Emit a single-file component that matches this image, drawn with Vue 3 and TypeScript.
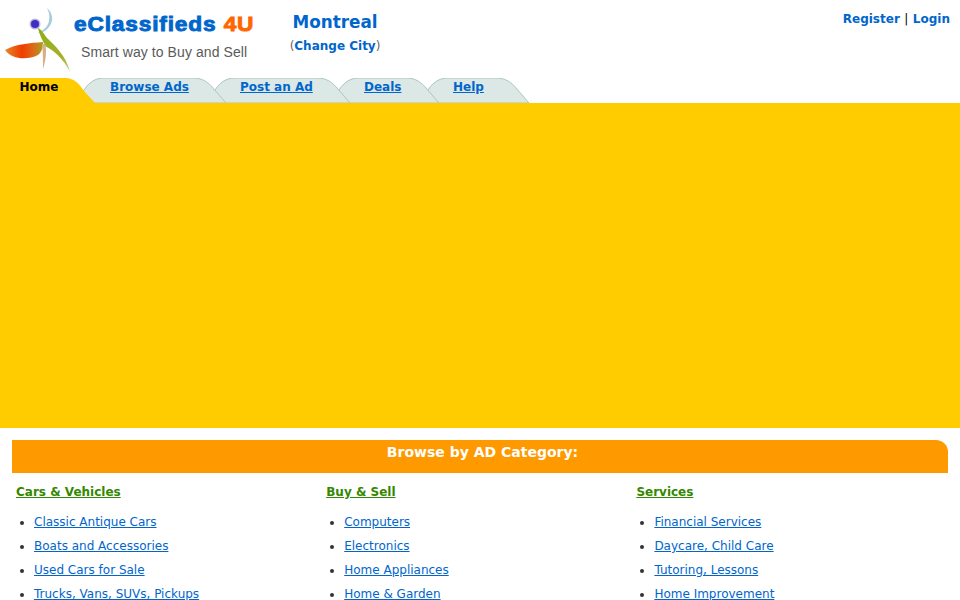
<script setup lang="ts">
interface Tab { label: string; width: number; pad: number; active?: boolean }
const tabs: Tab[] = [
  { label: 'Home', width: 95, pad: 19.5, active: true },
  { label: 'Browse Ads', width: 147, pad: 31 },
  { label: 'Post an Ad', width: 140, pad: 30 },
  { label: 'Deals', width: 105, pad: 30 },
  { label: 'Help', width: 106, pad: 30 },
]
function shape(t: Tab): string {
  const w = t.width
  if (t.active) return `M0 25V0H${w - 30}C${w - 20} 0 ${w - 15} 7 ${w - 11} 13L${w} 25Z`
  return `M0 25L4 14C8 6 15 0 25 0H${w - 33}C${w - 23} 0 ${w - 17} 5 ${w - 13} 10L${w} 25Z`
}
const columns = [
  { title: 'Cars & Vehicles', items: ['Classic Antique Cars', 'Boats and Accessories', 'Used Cars for Sale', 'Trucks, Vans, SUVs, Pickups'] },
  { title: 'Buy & Sell', items: ['Computers', 'Electronics', 'Home Appliances', 'Home & Garden'] },
  { title: 'Services', items: ['Financial Services', 'Daycare, Child Care', 'Tutoring, Lessons', 'Home Improvement'] },
]
</script>

<template>
  <div class="page">
    <header class="header">
      <div class="logo">
        <svg class="mark" width="74" height="78" viewBox="0 0 74 78" aria-hidden="true">
          <defs>
            <linearGradient id="wing" x1="0" y1="0" x2="1" y2="0">
              <stop offset="0" stop-color="#e8862a" />
              <stop offset="0.45" stop-color="#f03c00" />
              <stop offset="0.75" stop-color="#dc6a1a" />
              <stop offset="1" stop-color="#a8a020" />
            </linearGradient>
            <linearGradient id="leg" x1="0" y1="0" x2="0" y2="1">
              <stop offset="0" stop-color="#8cae10" />
              <stop offset="0.7" stop-color="#a8b030" />
              <stop offset="1" stop-color="#d0d090" />
            </linearGradient>
          </defs>
          <path d="M47 8C53 13 54 21 49 27C46 31 42 33 38 33C43 30 48 27 49 21C50 16 49 12 47 8Z" fill="#a9cbdc" />
          <circle cx="35" cy="24" r="5.5" fill="#b6b4ec" />
          <circle cx="35" cy="24" r="4" fill="#3f2cc0" />
          <path d="M5 50C16 44 30 43 43 42C43 47 42 52 38 55C28 60 12 60 5 50Z" fill="url(#wing)" />
          <path d="M38 28C41 29 44 34 47 38C55 46 66 55 70 72C63 58 53 50 45 46C42 39 39 34 38 28Z" fill="url(#leg)" />
          <path d="M45 43C47 51 46 60 43 69C43 60 43 51 42 45Z" fill="#d8b088" />
        </svg>
        <div class="wordmark">
          <div class="brand">eClassifieds <span class="four">4U</span></div>
          <div class="slogan">Smart way to Buy and Sell</div>
        </div>
      </div>
      <div class="city">
        <a class="city-name" href="#">Montreal</a>
        <div class="change">(<a href="#">Change City</a>)</div>
      </div>
      <div class="account">
        <a href="#">Register</a><span class="sep">|</span><a href="#">Login</a>
      </div>
    </header>

    <nav class="tabs">
      <div
        v-for="(t, i) in tabs"
        :key="t.label"
        class="tab"
        :class="{ active: t.active }"
        :style="{ width: t.width + 'px', paddingLeft: t.pad + 'px', zIndex: tabs.length - i }"
      >
        <svg class="tab-bg" :width="t.width" height="25" :viewBox="`0 0 ${t.width} 25`" aria-hidden="true">
          <path :d="shape(t)" class="tab-shape" />
        </svg>
        <a class="tab-link" href="#">{{ t.label }}</a>
      </div>
    </nav>

    <div class="band"></div>

    <section class="browse">
      <h2 class="browse-title">Browse by AD Category:</h2>
      <div class="columns">
        <div v-for="c in columns" :key="c.title" class="column">
          <a class="col-title" href="#">{{ c.title }}</a>
          <ul class="col-list">
            <li v-for="item in c.items" :key="item"><a href="#">{{ item }}</a></li>
          </ul>
        </div>
      </div>
    </section>
  </div>
</template>

<style>
html, body { margin: 0; background: #fff; overflow: hidden; }
</style>

<style scoped>
.page {
  width: 960px;
  height: 600px;
  overflow: hidden;
  font-family: "DejaVu Sans", sans-serif;
  font-size: 12px;
  color: #000;
}
a { color: #0066cc; }
.header { display: flex; height: 78px; }
.logo { width: 260px; display: flex; flex: none; }
.mark { flex: none; }
.wordmark { font-family: "Liberation Sans", Arial, sans-serif; }
.brand {
  margin-top: 10px;
  font-size: 21px;
  line-height: 28px;
  font-weight: 700;
  color: #0066cc;
  white-space: nowrap;
  letter-spacing: 0.78px;
  -webkit-text-stroke: 0.9px currentColor;
  transform: scaleX(1.08);
  transform-origin: left center;
}
.four { color: #ff6600; }
.slogan {
  margin: 6px 0 0 7px;
  font-size: 14px;
  line-height: 16px;
  color: #5a5a5a;
  white-space: nowrap;
  letter-spacing: 0.08px;
}
.city { width: 150px; flex: none; text-align: center; padding-top: 11px; }
.city-name { font-size: 16.8px; line-height: 22px; font-weight: 700; text-decoration: none; display: block; }
.change { margin-top: 6px; line-height: 14px; color: #666; }
.change a { font-weight: 700; text-decoration: none; }
.account { margin-left: auto; padding: 12px 10px 0 0; line-height: 14px; }
.account a { font-weight: 700; text-decoration: none; }
.sep { margin: 0 4.5px; }

.tabs { display: flex; height: 25px; }
.tab {
  position: relative;
  flex: none;
  box-sizing: border-box;
  margin-left: -16px;
  height: 25px;
  line-height: 18px;
  white-space: nowrap;
}
.tab.active { margin-left: 0; }
.tab-bg { position: absolute; left: 0; top: 0; }
.tab-shape { fill: #dce8e6; stroke: #adc4c1; stroke-width: 1; }
.active .tab-shape { fill: #ffcc00; stroke: none; }
.tab-link { position: relative; font-weight: 700; }
.active .tab-link { color: #000; text-decoration: none; }

.band { height: 325px; background: #ffcc00; }

.browse { padding: 12px 12px 0; }
.browse-title {
  margin: 0;
  height: 33px;
  padding-left: 5px;
  box-sizing: border-box;
  background: #ff9900;
  border-top-right-radius: 12px;
  color: #fff;
  font-size: 14px;
  line-height: 24px;
  font-weight: 700;
  text-align: center;
}
.columns { display: flex; padding-left: 4px; }
.column { width: 310.2px; flex: none; padding-top: 12px; }
.col-title { display: block; color: #338800; font-weight: 700; line-height: 14px; }
.col-list { margin: 11px 0 0; padding: 0 0 0 18px; }
.col-list li { height: 24px; line-height: 24px; color: #333; }
</style>
